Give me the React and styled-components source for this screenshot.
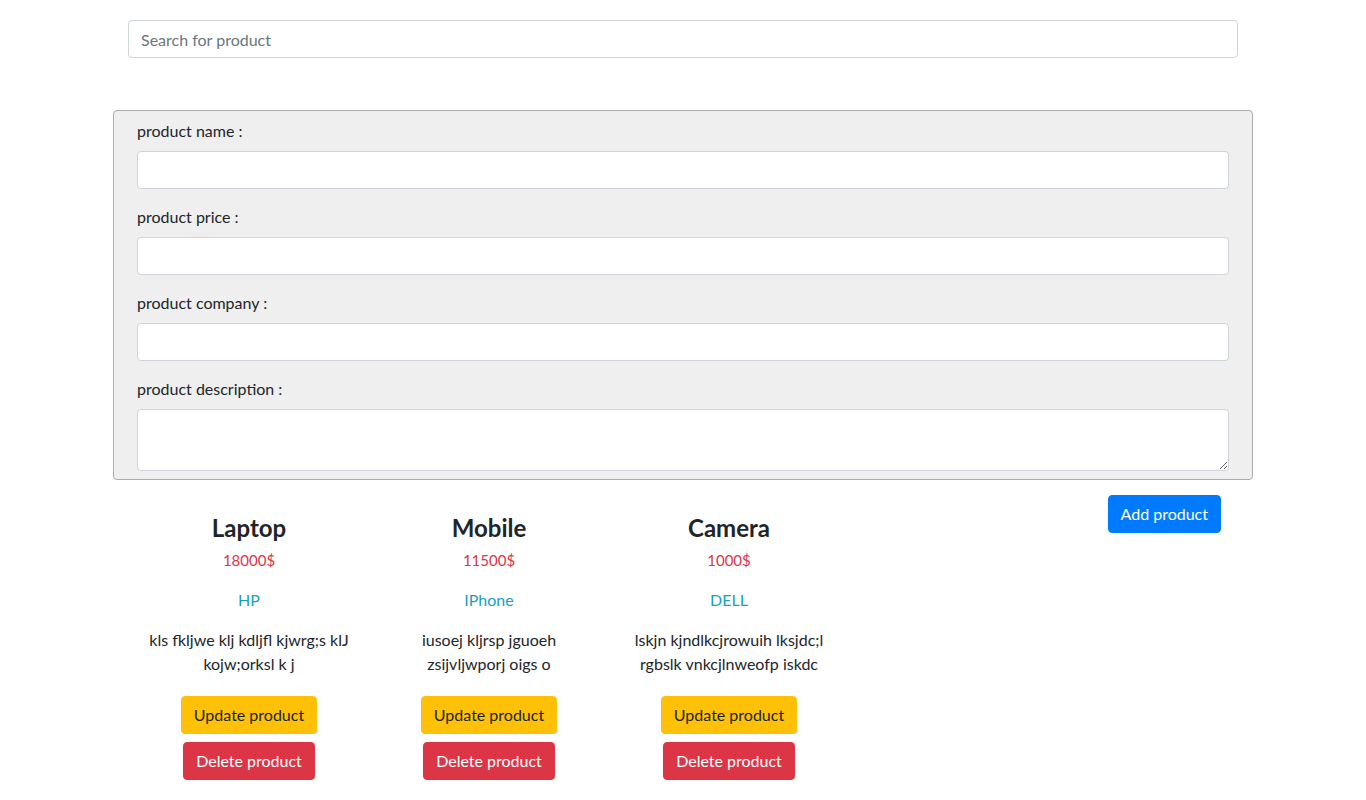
import React from 'react';
import styled, { createGlobalStyle } from 'styled-components';

const GlobalStyle = createGlobalStyle`
  body {
    margin: 0;
    font-family: "Segoe UI", Lato, "Noto Sans", sans-serif;
    font-size: 16px;
    line-height: 1.5;
    color: #212529;
    background: #fff;
  }
  * { box-sizing: border-box; }
`;

const products = [
  {
    name: 'Laptop',
    price: '18000$',
    company: 'HP',
    description: 'kls fkljwe klj kdljfl kjwrg;s klJ kojw;orksl k j',
  },
  {
    name: 'Mobile',
    price: '11500$',
    company: 'IPhone',
    description: 'iusoej kljrsp jguoeh zsijvljwporj oigs o',
  },
  {
    name: 'Camera',
    price: '1000$',
    company: 'DELL',
    description: 'lskjn kjndlkcjrowuih lksjdc;l rgbslk vnkcjlnweofp iskdc',
  },
];

const fields = ['product name :', 'product price :', 'product company :'];

class App extends React.Component {
  render() {
    return (
      <>
        <GlobalStyle />
        <Page>
          <SearchInput placeholder="Search for product" />
          <FormBox>
            {fields.map((label) => (
              <FormGroup key={label}>
                <Label>{label}</Label>
                <Input />
              </FormGroup>
            ))}
            <FormGroup last>
              <Label>product description :</Label>
              <TextArea rows={2} />
            </FormGroup>
          </FormBox>
          <BottomRow>
            <Products>
              {products.map((p) => (
                <Card key={p.name}>
                  <Title>{p.name}</Title>
                  <Price>{p.price}</Price>
                  <Company>{p.company}</Company>
                  <Description>{p.description}</Description>
                  <Button variant="warning">Update product</Button>
                  <Button variant="danger">Delete product</Button>
                </Card>
              ))}
            </Products>
            <AddWrap>
              <Button variant="primary">Add product</Button>
            </AddWrap>
          </BottomRow>
        </Page>
      </>
    );
  }
}

const Page = styled.div`
  width: 1140px;
  margin: 0 auto;
  padding-top: 20px;
  display: flex;
  flex-direction: column;
`;

const fieldBase = `
  display: block;
  width: 100%;
  height: 38px;
  padding: 6px 12px;
  font-family: inherit;
  font-size: 16px;
  line-height: 24px;
  color: #495057;
  background: #fff;
  border: 1px solid #ced4da;
  border-radius: 4px;
  outline: none;
  &::placeholder { color: #6c757d; }
`;

const SearchInput = styled.input`
  ${fieldBase}
  width: auto;
  margin: 0 15px 52px;
`;

const FormBox = styled.div`
  background: #efefef;
  border: 1px solid #acacac;
  border-radius: 4px;
  padding: 8px 23px;
`;

const FormGroup = styled.div`
  margin-bottom: ${(p) => (p.last ? '0' : '16px')};
`;

const Label = styled.label`
  display: block;
  margin-bottom: 8px;
  line-height: 24px;
  color: #212529;
`;

const Input = styled.input`
  ${fieldBase}
`;

const TextArea = styled.textarea`
  ${fieldBase}
  height: 62px;
  resize: vertical;
`;

const BottomRow = styled.div`
  display: flex;
  align-items: flex-start;
`;

const Products = styled.div`
  display: grid;
  grid-template-columns: repeat(3, 240px);
  margin-left: 16px;
  padding-top: 33px;
`;

const Card = styled.div`
  display: flex;
  flex-direction: column;
  align-items: center;
  text-align: center;
  padding: 0 15px;
`;

const Title = styled.h4`
  margin: 0 0 6px;
  font-size: 24px;
  line-height: 29px;
  font-weight: 700;
  color: #212529;
`;

const Price = styled.p`
  margin: 0 0 16px;
  font-size: 15px;
  line-height: 24px;
  color: #dc3545;
`;

const Company = styled.p`
  margin: 0 0 16px;
  line-height: 24px;
  color: #17a2b8;
`;

const Description = styled.p`
  margin: 0 0 16px;
  line-height: 24px;
  color: #212529;
`;

const colors = {
  primary: { bg: '#007bff', fg: '#fff' },
  warning: { bg: '#ffc107', fg: '#212529' },
  danger: { bg: '#dc3545', fg: '#fff' },
};

const Button = styled.button`
  display: inline-block;
  margin: 4px;
  padding: 6px 12px;
  font-family: inherit;
  font-size: 16px;
  line-height: 24px;
  border: 1px solid ${(p) => colors[p.variant].bg};
  border-radius: 4px;
  background: ${(p) => colors[p.variant].bg};
  color: ${(p) => colors[p.variant].fg};
  cursor: pointer;
`;

const AddWrap = styled.div`
  margin-left: auto;
  margin-right: 28px;
  margin-top: 11px;
`;

export default App;
